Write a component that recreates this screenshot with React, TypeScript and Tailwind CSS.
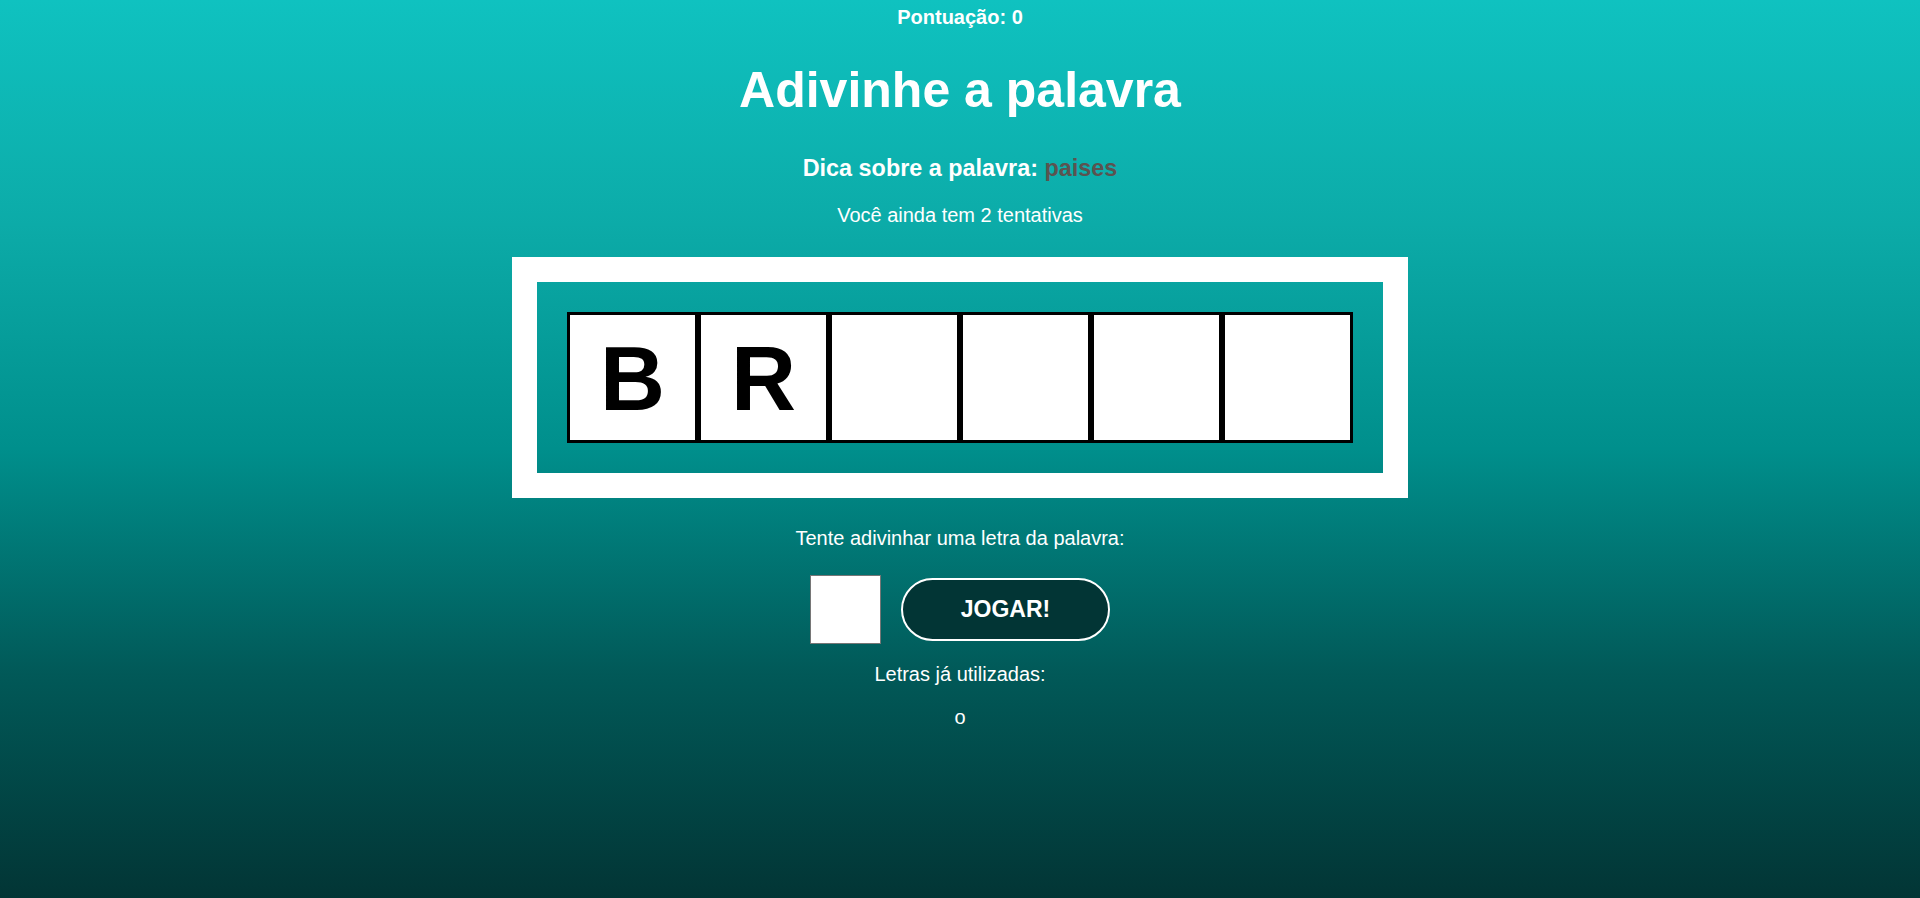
import * as React from 'react'

const WORD = ['B', 'R', '', '', '', '']
const USED = ['o']

function LetterBox({ letter }: { letter: string }) {
  return (
    <div className="flex h-[131px] w-[131px] items-center justify-center border-[3px] border-black bg-white pt-[3px] text-[90px] font-bold leading-none text-black">
      {letter}
    </div>
  )
}

export default function App() {
  const [guess, setGuess] = React.useState('')

  return (
    <div className="flex min-h-screen w-full flex-col items-center bg-[linear-gradient(#0FC2C0,#0CABA8,#008F8C,#015958,#023535)] font-['Liberation_Sans',Arial,sans-serif] text-[20px] text-white">
      {/* placar */}
      <p className="mt-[6px] font-bold leading-[23px]">Pontuação: 0</p>

      <h1 className="mt-[33px] text-[50px] font-bold leading-[57px]">
        Adivinhe a palavra
      </h1>

      <h3 className="mt-[36px] text-[23.4px] font-bold leading-[27px]">
        Dica sobre a palavra: <span className="text-[#5b5350]">paises</span>
      </h3>

      <p className="mt-[22px] leading-[23px]">Você ainda tem 2 tentativas</p>

      {/* tabuleiro */}
      <div className="mt-[30px] border-[25px] border-white p-[30px]">
        <div className="flex">
          {WORD.map((letter, i) => (
            <LetterBox key={i} letter={letter} />
          ))}
        </div>
      </div>

      <p className="mt-[29px] leading-[23px]">
        Tente adivinhar uma letra da palavra:
      </p>

      <div className="mt-[25px] flex items-center gap-[20px]">
        <input
          type="text"
          maxLength={1}
          value={guess}
          onChange={(e) => setGuess(e.target.value)}
          className="h-[69px] w-[71px] border border-[#767676] bg-white text-center text-[40px] text-black outline-none"
        />
        <button className="h-[63px] w-[209px] rounded-full border-2 border-white bg-[#023535] text-[23px] font-bold text-white">
          JOGAR!
        </button>
      </div>

      <p className="mt-[19px] leading-[23px]">Letras já utilizadas:</p>

      <div className="mt-[20px] flex gap-2 leading-[23px]">
        {USED.map((l) => (
          <span key={l}>{l}</span>
        ))}
      </div>
    </div>
  )
}
